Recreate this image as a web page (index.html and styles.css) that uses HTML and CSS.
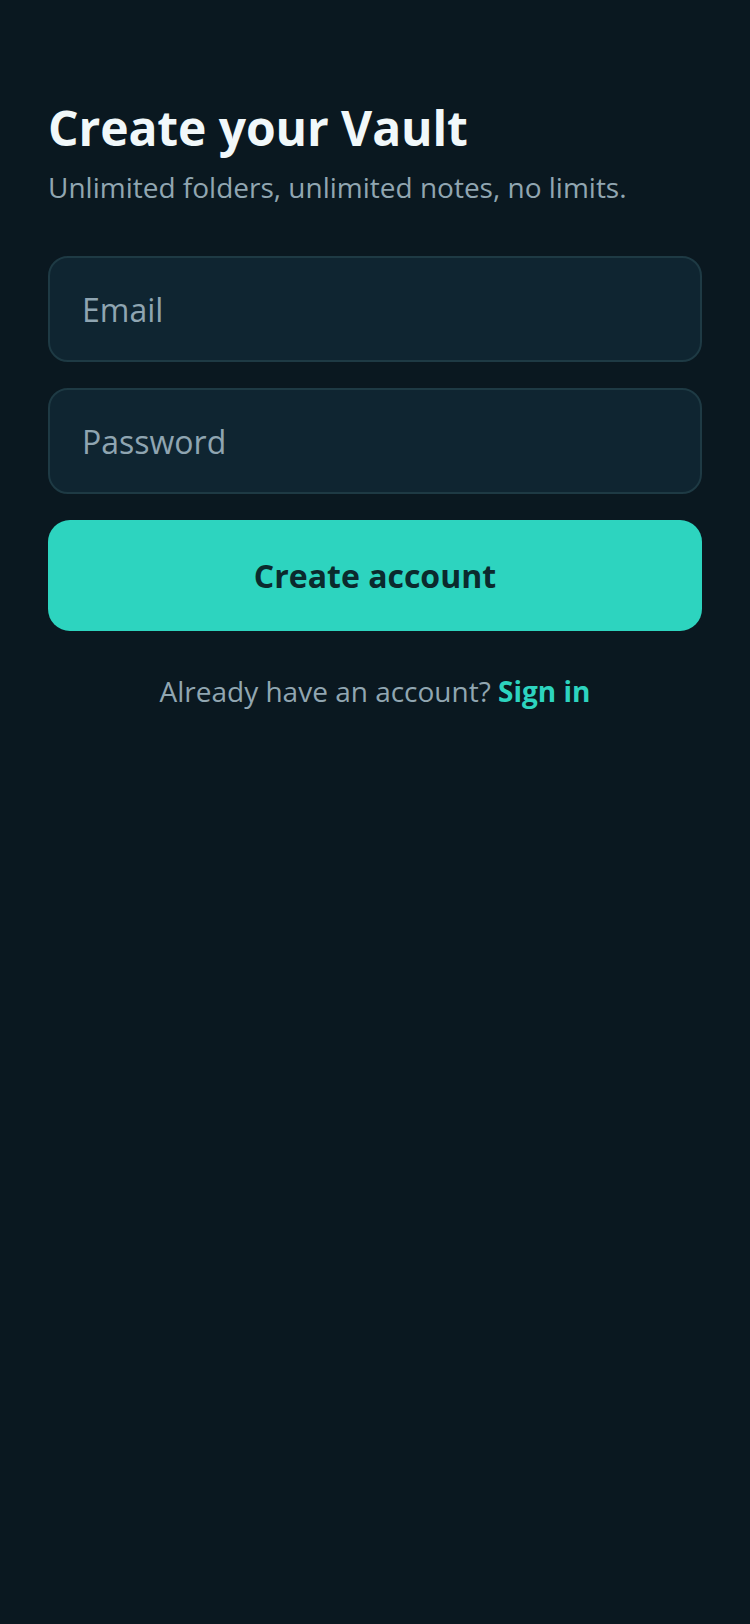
FILE: index.html
```html
<!DOCTYPE html>
<html lang="en">
<head>
<meta charset="utf-8">
<title>Create your Vault</title>
<link rel="stylesheet" href="styles.css">
</head>
<body>
<main class="page">
  <header class="intro">
    <h1 class="title">Create your Vault</h1>
    <p class="subtitle">Unlimited folders, unlimited notes, no limits.</p>
  </header>
  <form class="form">
    <div class="field"><span class="placeholder">Email</span></div>
    <div class="field"><span class="placeholder">Password</span></div>
    <button type="button" class="primary">Create account</button>
  </form>
  <p class="switch">Already have an account? <a class="link">Sign in</a></p>
</main>
</body>
</html>
```

FILE: styles.css
```css
html, body {
  margin: 0;
  padding: 0;
  background: #0a1820;
}
body {
  font-family: "Open Sans", "Noto Sans", sans-serif;
  min-height: 1624px;
}
.page {
  padding: 98px 48px 0;
  display: flex;
  flex-direction: column;
}
.intro {
  display: flex;
  flex-direction: column;
  gap: 11px;
}
.title {
  margin: 0;
  font-size: 48px;
  line-height: 60px;
  font-weight: 700;
  color: #f1f8fa;
  letter-spacing: -0.1px;
}
.subtitle {
  margin: 0;
  font-size: 28px;
  line-height: 36px;
  color: #91a6b1;
}
.form {
  margin-top: 51px;
  display: flex;
  flex-direction: column;
  gap: 26px;
}
.field {
  height: 106px;
  box-sizing: border-box;
  border: 2px solid #1e3a44;
  border-radius: 20px;
  background: #0f2531;
  display: flex;
  align-items: center;
  padding: 0 32px;
}
.placeholder {
  font-size: 32px;
  color: #8fa5b1;
}
.primary {
  height: 111px;
  border: none;
  border-radius: 22px;
  background: #2dd4bf;
  color: #0b2a2d;
  font-family: inherit;
  font-size: 32px;
  font-weight: 700;
}
.switch {
  margin: 40px 0 0;
  text-align: center;
  font-size: 28px;
  line-height: 40px;
  color: #91a6b1;
}
.link {
  color: #2dd4bf;
  font-weight: 700;
}
```
